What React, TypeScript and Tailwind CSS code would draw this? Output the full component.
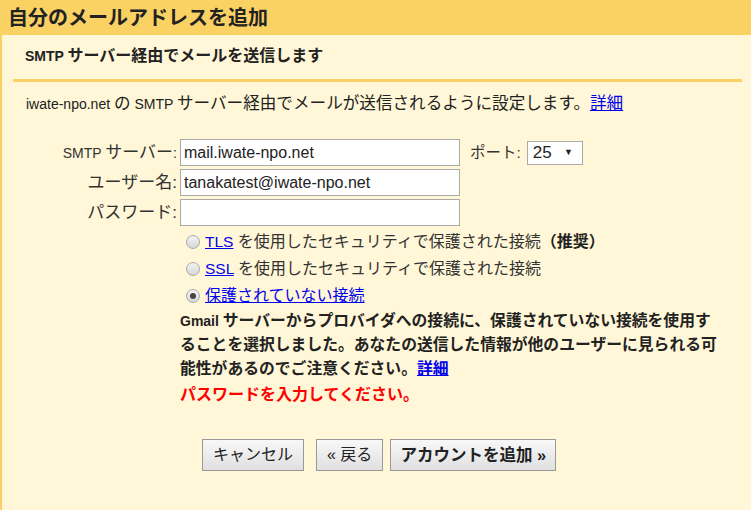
import { useState } from 'react';

const FONT = { fontFamily: '"Liberation Sans", "Noto Sans CJK JP", sans-serif' };

// the Japanese glyphs in this screen run wider than the Latin ones, so CJK runs get their own size
const CJK = /([\u3000-\u30ff\u4e00-\u9fff\uff00-\uffef]+)/;

function Mix({ text, cjk }: { text: string; cjk: string }) {
  return (
    <>
      {text.split(CJK).map((part, i) =>
        CJK.test(part) ? (
          <span key={i} className={cjk}>
            {part}
          </span>
        ) : (
          part
        )
      )}
    </>
  );
}

type Security = 'tls' | 'ssl' | 'none';

function Radio({ checked, onClick }: { checked: boolean; onClick: () => void }) {
  return (
    <span
      onClick={onClick}
      className="w-[14px] h-[14px] rounded-full border border-[#a9a9a9] bg-gradient-to-b from-[#f4f4f4] to-[#d6d6d6] flex items-center justify-center shrink-0 cursor-pointer"
    >
      {checked && <span className="w-[6px] h-[6px] rounded-full bg-[#444]" />}
    </span>
  );
}

const inputCls =
  'w-[280px] h-[27px] ml-[3px] border border-[#aaa] bg-white px-[3px] text-[16px] text-[#222] outline-none';

const btnCls =
  'h-[32px] border border-[#999] bg-gradient-to-b from-[#f8f8f8] to-[#e0e0e0] text-[#222] leading-none';

export default function App() {
  const [security, setSecurity] = useState<Security>('none');

  return (
    <div style={FONT} className="w-[751px] h-[510px] overflow-hidden bg-[#fff7d7] text-[#222] flex flex-col">
      <div className="h-[35px] bg-[#fad163] flex items-center pl-[8px] shrink-0">
        <h1 className="text-[20px] font-bold text-[#222] leading-none">自分のメールアドレスを追加</h1>
      </div>
      <div className="flex-1 border-l-2 border-[#fad163] flex flex-col">
        <div className="pl-[23px] pt-[11px] h-[44px] text-[14px] font-bold leading-[20px]">
          <Mix text="SMTP サーバー経由でメールを送信します" cjk="text-[16px]" />
        </div>
        <div className="ml-[11px] mr-[9px] h-[3px] bg-[#fad163]" />
        <p className="pl-[24px] pt-[13px] text-[14px] leading-[18px]">
          <Mix text="iwate-npo.net の SMTP サーバー経由でメールが送信されるように設定します。" cjk="text-[16.6px]" />
          <a href="#" className="text-[#0000ee] underline text-[16.6px]">詳細</a>
        </p>

        <div className="mt-[26px] flex flex-col gap-[3px] text-[14px] text-[#333]">
          <div className="flex items-center">
            <label className="w-[175px] text-right">
              <Mix text="SMTP サーバー:" cjk="text-[17px]" />
            </label>
            <input defaultValue="mail.iwate-npo.net" className={inputCls} style={FONT} />
            <span className="ml-[10px] text-[15.5px]">ポート:</span>
            <div className="ml-[6px] w-[56px] h-[24px] border border-[#aaa] bg-white flex items-center justify-between pl-[5px] pr-[9px] text-[17px] text-[#222]">
              <span>25</span>
              <span className="text-[9px]">▼</span>
            </div>
          </div>
          <div className="flex items-center">
            <label className="w-[175px] text-right text-[17px]">ユーザー名:</label>
            <input defaultValue="tanakatest@iwate-npo.net" className={inputCls} style={FONT} />
          </div>
          <div className="flex items-center">
            <label className="w-[175px] text-right text-[17px]">パスワード:</label>
            <input type="password" className={inputCls} />
          </div>
        </div>

        <div className="ml-[184px] mt-[7px] flex flex-col gap-[9px] text-[15.5px] text-[#333]">
          <div className="flex items-center gap-[5px] h-[18px]">
            <Radio checked={security === 'tls'} onClick={() => setSecurity('tls')} />
            <span className="leading-[18px]">
              <a href="#" className="text-[#0000ee] underline">TLS</a>{' '}
              <span className="text-[16px]">を使用したセキュリティで保護された接続</span>
              <b className="text-[#222] text-[16px]">（推奨）</b>
            </span>
          </div>
          <div className="flex items-center gap-[5px] h-[18px]">
            <Radio checked={security === 'ssl'} onClick={() => setSecurity('ssl')} />
            <span className="leading-[18px]">
              <a href="#" className="text-[#0000ee] underline">SSL</a>{' '}
              <span className="text-[16px]">を使用したセキュリティで保護された接続</span>
            </span>
          </div>
          <div className="flex items-center gap-[5px] h-[18px]">
            <Radio checked={security === 'none'} onClick={() => setSecurity('none')} />
            <a href="#" className="text-[#0000ee] underline text-[16px] leading-[18px]">保護されていない接続</a>
          </div>
        </div>

        <div className="ml-[178px] w-[543px] mt-[4px] text-[14px] font-bold leading-[24px] text-[#222]">
          <p>
            <Mix
              text="Gmail サーバーからプロバイダへの接続に、保護されていない接続を使用することを選択しました。あなたの送信した情報が他のユーザーに見られる可能性があるのでご注意ください。"
              cjk="text-[15.8px]"
            />
            <a href="#" className="text-[#0000ee] underline text-[15.8px]">詳細</a>
          </p>
          <p className="text-[#ff0000] text-[16px] leading-[28px]">パスワードを入力してください。</p>
        </div>

        <div className="ml-[200px] mt-[30px] flex items-center text-[16px]">
          <button className={`${btnCls} px-[10px]`}>キャンセル</button>
          <button className={`${btnCls} ml-[12px] px-[10px]`}>« 戻る</button>
          <button className={`${btnCls} ml-[7px] px-[9px] font-bold text-[16.5px]`}>アカウントを追加 »</button>
        </div>
      </div>
    </div>
  );
}
